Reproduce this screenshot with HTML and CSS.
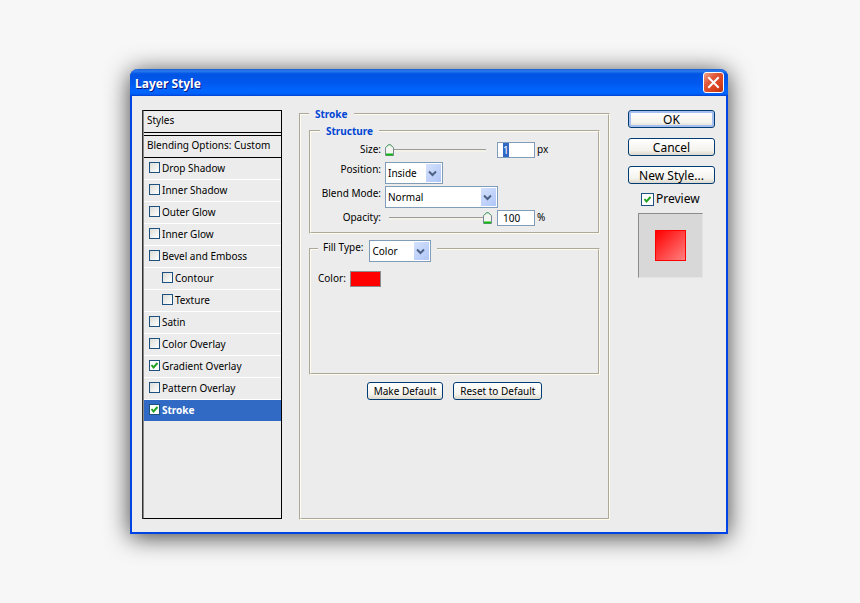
FILE: index.html
```html
<!DOCTYPE html>
<html lang="en">
<head>
    <meta charset="UTF-8">
    <meta name="viewport" content="width=device-width, initial-scale=1.0">
    <title>Layer Style</title>
    <link rel="stylesheet" href="styles.css">
    <script>
        window.onload = () => {
            document.getElementById('size').select();
        };
    </script>
</head>
<body>
    <form class="window">
        <div class="titlebar">
            <h1>Layer Style</h1>
            <button type="button" class="close" aria-label="Close">
                <svg width="13" height="13" viewBox="0 0 13 13"><path d="M2 2l9 9M11 2l-9 9" stroke="white" stroke-width="2" stroke-linecap="square"/></svg>
            </button>
        </div>
        <div class="content">
            <div class="styles">
                <div class="styles-head">Styles</div>
                <div class="styles-options">Blending Options: Custom</div>
                <ul>
                    <li><label><input type="checkbox">Drop Shadow</label></li>
                    <li><label><input type="checkbox">Inner Shadow</label></li>
                    <li><label><input type="checkbox">Outer Glow</label></li>
                    <li><label><input type="checkbox">Inner Glow</label></li>
                    <li><label><input type="checkbox">Bevel and Emboss</label></li>
                    <li class="sub"><label><input type="checkbox">Contour</label></li>
                    <li class="sub"><label><input type="checkbox">Texture</label></li>
                    <li><label><input type="checkbox">Satin</label></li>
                    <li><label><input type="checkbox">Color Overlay</label></li>
                    <li><label><input type="checkbox" checked>Gradient Overlay</label></li>
                    <li><label><input type="checkbox">Pattern Overlay</label></li>
                    <li class="active"><label><input type="checkbox" checked>Stroke</label></li>
                </ul>
            </div>

            <fieldset class="stroke">
                <legend>Stroke</legend>
                <fieldset class="structure">
                    <legend>Structure</legend>
                    <div class="grid">
                        <label for="size">Size:</label>
                        <input type="range" min="1" max="250" value="1" aria-label="Size slider">
                        <input type="text" id="size" value="1">
                        <span>px</span>

                        <label for="position">Position:</label>
                        <select id="position" class="wide">
                            <option>Inside</option>
                            <option>Outside</option>
                            <option>Center</option>
                        </select>

                        <label for="blend">Blend Mode:</label>
                        <select id="blend" class="wide blend">
                            <option>Normal</option>
                            <option>Multiply</option>
                            <option>Screen</option>
                        </select>

                        <label for="opacity">Opacity:</label>
                        <input type="range" min="0" max="100" value="100" aria-label="Opacity slider">
                        <input type="text" id="opacity" value="100">
                        <span>%</span>
                    </div>
                </fieldset>

                <fieldset class="fill">
                    <legend>
                        <label for="fillType">Fill Type:</label>
                        <select id="fillType">
                            <option>Color</option>
                            <option>Gradient</option>
                            <option>Pattern</option>
                        </select>
                    </legend>
                    <div class="color-row">
                        <label for="color">Color:</label>
                        <input type="color" id="color" value="#ff0000">
                    </div>
                </fieldset>

                <div class="defaults">
                    <button type="button">Make Default</button>
                    <button type="button">Reset to Default</button>
                </div>
            </fieldset>

            <div class="actions">
                <button type="submit" class="ok">OK</button>
                <button type="button">Cancel</button>
                <button type="button">New Style...</button>
                <label class="preview-label"><input type="checkbox" checked>Preview</label>
                <div class="preview"><div class="preview-square"></div></div>
            </div>
        </div>
    </form>
</body>
</html>
```

FILE: styles.css
```css
* {
    box-sizing: border-box;
}

body {
    margin: 0;
    padding: 69px 132px 69px 130px;
    min-height: 100vh;
    display: flex;
    background: #f7f7f7;
    font-family: "Noto Sans", sans-serif;
    font-size: 10px;
    line-height: 14px;
    color: #000;
}

input, select, button {
    appearance: none;
    margin: 0;
    font: inherit;
    color: inherit;
    border-radius: 0;
    outline: none;
}

/* window */
.window {
    flex: 1;
    display: flex;
    flex-direction: column;
    background: #ececec;
    border: 2px solid #0043e6;
    border-top: none;
    border-radius: 8px 8px 0 0;
    box-shadow: 0 3px 24px rgba(0, 0, 0, 0.75);
}

.titlebar {
    display: flex;
    align-items: center;
    justify-content: space-between;
    height: 27px;
    margin: 0 -2px;
    padding: 0 4px 0 5px;
    border-radius: 8px 8px 0 0;
    background: linear-gradient(#1a5ed0 0, #2a7af0 2px, #0054e3 5px, #0058ee 14px, #0066ff 22px, #0060f8 25px, #0040d0 27px);
}

.titlebar h1 {
    margin: 0;
    padding-top: 2px;
    font-size: 12px;
    font-weight: bold;
    color: #fff;
    text-shadow: 1px 1px 0 #0a1883;
}

.close {
    display: flex;
    align-items: center;
    justify-content: center;
    width: 21px;
    height: 21px;
    padding: 0;
    border: 1px solid #fff;
    border-radius: 3px;
    background: linear-gradient(135deg, #f0a58c, #e2583a 35%, #d9421c 70%, #b8320f);
}

.content {
    flex: 1;
    display: flex;
    padding: 14px 11px 13px 10px;
}

/* list of styles */
.styles {
    width: 140px;
    border: 1px solid #000;
    border-left: 2px groove #888;
}

.styles-head {
    height: 25px;
    padding: 2px 3px 0;
    border-bottom: 4px double #000;
}

.styles-options {
    height: 22px;
    padding: 2px 3px 0;
    border-bottom: 1px solid #000;
}

.styles ul {
    margin: 0;
    padding: 0;
    list-style: none;
}

.styles li {
    display: flex;
    height: 22px;
    padding: 0 0 2px 5px;
    border-bottom: 1px solid #fff;
}

.styles li.sub {
    padding-left: 18px;
}

.styles li.active {
    background: #316ac5;
    border-bottom-color: #ececec;
    color: #fff;
    font-weight: bold;
}

.styles label {
    display: flex;
    align-items: center;
    gap: 2px;
}

input[type="checkbox"] {
    width: 11px;
    height: 11px;
    border: 1px solid #1c5180;
    background: center no-repeat linear-gradient(135deg, #dcdcd7, #fff);
}

input[type="checkbox"]:checked {
    background: center / 9px 9px no-repeat url("data:image/svg+xml,%3Csvg xmlns='http://www.w3.org/2000/svg' viewBox='0 0 9 9'%3E%3Cpath d='M1.5 4l2 2.5L7.500 2' fill='none' stroke='%2321a121' stroke-width='2'/%3E%3C/svg%3E") #fff;
}

/* groups */
fieldset {
    min-width: 0;
    margin: 0;
    border: 2px groove #fffcec;
}

legend {
    padding: 0 6px;
    font-size: 10px;
    font-weight: bold;
    color: #0046d5;
}

.stroke {
    flex: 1;
    margin: -3px 18px -1px 17px;
    padding: 0 8px;
}

.structure {
    margin-top: 3px;
    padding: 4px 0 6px 9px;
}

.grid {
    display: grid;
    grid-template-columns: 61px 108px 38px auto;
    grid-template-rows: 18px 22px 22px 16px;
    gap: 2px 4px;
    align-items: start;
}

.grid label {
    text-align: right;
}

.grid span {
    margin-left: -2px;
}

.wide {
    grid-column: 2 / 5;
}

select {
    width: 58px;
    height: 22px;
    padding: 0 18px 0 2px;
    border: 1px solid #7f9db9;
    background:
        right 5px center / 9px 7px no-repeat url("data:image/svg+xml,%3Csvg xmlns='http://www.w3.org/2000/svg' viewBox='0 0 9 7'%3E%3Cpath d='M1 1.500l3.500 3.500L8 1.500' fill='none' stroke='%234d6185' stroke-width='2'/%3E%3C/svg%3E"),
        right 1px center / 15px 18px no-repeat linear-gradient(135deg, #d5e1fd, #afc6f8),
        #fff;
}

.blend {
    width: 113px;
}

input[type="text"] {
    width: 38px;
    height: 16px;
    padding: 0 5px;
    border: 1px solid #7f9db9;
    background: #fff;
}

input::selection {
    background: #316ac5;
    color: #fff;
}

input[type="range"] {
    width: 107px;
    height: 16px;
    background: 4px 7px / 97px 3px no-repeat linear-gradient(#9d9c99 1px, #f3f2e9 1px);
}

input[type="range"]::-webkit-slider-thumb {
    appearance: none;
    width: 9px;
    height: 12px;
    background: url("data:image/svg+xml,%3Csvg xmlns='http://www.w3.org/2000/svg' viewBox='0 0 9 12'%3E%3Cpath d='M.5 11.500v-8l3-3h2l3 3v8z' fill='%23f4f4f1' stroke='%23778892'/%3E%3Cpath d='M1 3.500L3.500 1h2L8 3.500' fill='none' stroke='%2360c070'/%3E%3Cpath d='M1 10.500h7' stroke='%2314b814' stroke-width='2'/%3E%3C/svg%3E");
}

.fill {
    height: 135px;
    margin-top: 6px;
    padding: 0 7px;
}

.fill legend {
    display: flex;
    gap: 6px;
    height: 18px;
    padding: 0 6px 0 5px;
    font-weight: normal;
    color: #000;
}

.fill legend select {
    width: 62px;
}

.color-row {
    display: flex;
    gap: 4px;
    padding-top: 13px;
}

input[type="color"] {
    width: 31px;
    height: 16px;
    padding: 0;
    border: 1px solid #8c8c8c;
}

input[type="color"]::-webkit-color-swatch-wrapper {
    padding: 0;
}

input[type="color"]::-webkit-color-swatch {
    border: none;
    border-radius: 0;
}

/* buttons */
.defaults {
    display: flex;
    justify-content: center;
    gap: 10px;
    margin-top: 7px;
}

.defaults button, .actions button {
    height: 18px;
    padding: 0 6px;
    border: 1px solid #003c74;
    border-radius: 3px;
    background: linear-gradient(#fff, #f4f3ee 70%, #dcd8cc);
    white-space: nowrap;
}

.actions {
    display: flex;
    flex-direction: column;
    gap: 10px;
    width: 87px;
    font-size: 12px;
}

.actions button {
    padding: 2px 0 0;
}

.actions .ok {
    box-shadow: inset 0 0 0 2px #a5c0f0;
}

.preview-label {
    display: flex;
    align-items: center;
    gap: 2px;
    margin: -2px 0 -3px 13px;
}

.preview-label input[type="checkbox"] {
    width: 13px;
    height: 13px;
}

.preview {
    display: flex;
    align-items: center;
    justify-content: center;
    margin-left: 10px;
    width: 65px;
    height: 65px;
    border: 1px solid;
    border-color: #8c8c8c #e4e4e4 #e4e4e4 #8c8c8c;
    background: #d8d8d8;
}

.preview-square {
    width: 31px;
    height: 31px;
    border: 1px solid #f00;
    background: linear-gradient(135deg, #f00, #ff8080);
}
```
